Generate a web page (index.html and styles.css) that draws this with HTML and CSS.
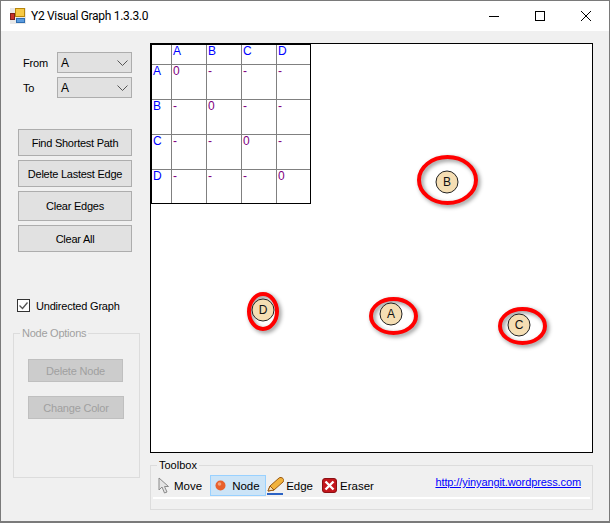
FILE: index.html
```html
<!DOCTYPE HTML>
<html>
<head>
<meta http-equiv="Content-Type" content="text/html; charset=utf-8">
<title>Y2 Visual Graph 1.3.3.0</title>
<link rel="stylesheet" href="styles.css">
</head>
<body>
<div class="window">
	<div class="titlebar">
		<svg class="app-icon" width="16" height="16" viewBox="0 0 16 16">
			<rect x="0" y="0" width="16" height="16" fill="#e8e8e8"/>
			<rect x="5.5" y="0.5" width="9" height="8" fill="#f6c945" stroke="#b8860b"/>
			<rect x="0.5" y="5.5" width="4" height="6" fill="#c8322a" stroke="#7c1d18"/>
			<rect x="6.5" y="10.5" width="8" height="4" fill="#5b9bde" stroke="#2f6db0"/>
		</svg>
		<span class="title">Y2 Visual Graph 1.3.3.0</span>
		<div class="caption">
			<svg class="cap-btn" width="46" height="30" viewBox="0 0 46 30"><path d="M18 15.5h10" stroke="#000" fill="none"/></svg>
			<svg class="cap-btn" width="46" height="30" viewBox="0 0 46 30"><rect x="18.5" y="10.5" width="9" height="9" stroke="#000" fill="none"/></svg>
			<svg class="cap-btn" width="46" height="30" viewBox="0 0 46 30"><path d="M18 10l10 10M28 10l-10 10" stroke="#000" fill="none"/></svg>
		</div>
	</div>
	<div class="content">
		<div class="sidebar">
			<div class="field">
				<label>From</label>
				<div class="combo">A<svg width="11" height="6" viewBox="0 0 11 6"><path d="M0.5 0.5l5 5 5-5" stroke="#555" fill="none"/></svg></div>
			</div>
			<div class="field">
				<label>To</label>
				<div class="combo">A<svg width="11" height="6" viewBox="0 0 11 6"><path d="M0.5 0.5l5 5 5-5" stroke="#555" fill="none"/></svg></div>
			</div>
			<div class="actions">
				<button class="btn">Find Shortest Path</button>
				<button class="btn">Delete Lastest Edge</button>
				<button class="btn tall">Clear Edges</button>
				<button class="btn">Clear All</button>
			</div>
			<div class="check">
				<svg width="13" height="13" viewBox="0 0 13 13"><rect x="0.5" y="0.5" width="12" height="12" fill="#fff" stroke="#333"/><path d="M2.5 6.5l3 3 5-6" stroke="#555" stroke-width="1.3" fill="none"/></svg>
				<span>Undirected Graph</span>
			</div>
			<fieldset class="node-options">
				<legend>Node Options</legend>
				<button class="btn-off" disabled>Delete Node</button>
				<button class="btn-off wide" disabled>Change Color</button>
			</fieldset>
		</div>
		<div class="main">
			<div class="canvas">
				<div class="matrix">
					<div class="cell"></div><div class="cell head">A</div><div class="cell head">B</div><div class="cell head">C</div><div class="cell head">D</div>
					<div class="cell head">A</div><div class="cell val">0</div><div class="cell val">-</div><div class="cell val">-</div><div class="cell val">-</div>
					<div class="cell head">B</div><div class="cell val">-</div><div class="cell val">0</div><div class="cell val">-</div><div class="cell val">-</div>
					<div class="cell head">C</div><div class="cell val">-</div><div class="cell val">-</div><div class="cell val">0</div><div class="cell val">-</div>
					<div class="cell head">D</div><div class="cell val">-</div><div class="cell val">-</div><div class="cell val">-</div><div class="cell val">0</div>
				</div>
				<!-- nodes: coords are canvas relative -->
				<svg class="graph" width="441" height="408" viewBox="0 0 441 408">
					<g class="rings">
						<ellipse cx="296.500" cy="136" rx="28.500" ry="23"/>
						<ellipse cx="242.500" cy="272" rx="22.500" ry="17"/>
						<ellipse cx="371.500" cy="282" rx="22.500" ry="17"/>
						<ellipse cx="112" cy="267.500" rx="14" ry="17.500"/>
					</g>
					<g class="node"><circle cx="296" cy="138" r="11"/><text x="296" y="142">B</text></g>
					<g class="node"><circle cx="240" cy="270" r="11"/><text x="240" y="274">A</text></g>
					<g class="node"><circle cx="368" cy="281" r="11"/><text x="368" y="285">C</text></g>
					<g class="node"><circle cx="112" cy="266" r="11"/><text x="112" y="270">D</text></g>
				</svg>
			</div>
			<fieldset class="toolbox">
				<legend>Toolbox</legend>
				<div class="strip">
					<div class="tool move">
						<svg width="12" height="17" viewBox="0 0 12 17"><path d="M1 1v12l3-3 2.500 6 2.500-1-2.500-5.500h4z" fill="#e4e4e4" stroke="#8a8a8a"/></svg>
						<span>Move</span>
					</div>
					<div class="tool active">
						<svg width="11" height="11" viewBox="0 0 11 11"><circle cx="5.500" cy="5.500" r="5" fill="#e8602c"/><circle cx="4.500" cy="4" r="1.800" fill="#f3a27c"/></svg>
						<span>Node</span>
					</div>
					<div class="tool pencil">
						<svg width="17" height="18" viewBox="0 0 17 18"><path d="M1 14l2-5 9-8c1-1 3-.5 4 .5s1 2.500 0 3.500l-9 8z" fill="#f2b33d" stroke="#9a5a12"/><path d="M1 14l2-5 4 4z" fill="#f7dfb5" stroke="#9a5a12"/><rect x="0" y="16" width="16" height="2" fill="#2a62c4"/></svg>
						<span>Edge</span>
					</div>
					<div class="tool eraser">
						<svg width="15" height="15" viewBox="0 0 15 15"><rect x="0.500" y="0.500" width="14" height="14" rx="2.500" fill="#c4161c" stroke="#8a1014"/><path d="M3.500 3.500l8 8M11.500 3.500l-8 8" stroke="#fff" stroke-width="2.400" fill="none"/></svg>
						<span>Eraser</span>
					</div>
					<a class="site-link" href="#">http://yinyangit.wordpress.com</a>
				</div>
			</fieldset>
		</div>
	</div>
</div>
</body>
</html>
```

FILE: styles.css
```css
html,body{ margin:0;padding:0;}
body{ width:610px;height:523px;overflow:hidden;font:11px "Liberation Sans",Arial,sans-serif;color:#000;}

.window{ width:610px;height:523px;box-sizing:border-box;border:1px solid #7a7a7a;border-bottom-width:2px;background:#f0f0f0;display:flex;flex-direction:column;}

.titlebar{ height:30px;background:#fff;display:flex;align-items:center;flex:none;}
.app-icon{ margin-left:9px;}
.title{ margin-left:5px;font:12px Roboto,sans-serif;letter-spacing:-0.3px;}
.caption{ margin-left:auto;display:flex;}
.cap-btn{ display:block;}

.content{ flex:1;display:flex;min-height:0;}

.sidebar{ width:149px;flex:none;padding:21px 0 0 16px;box-sizing:border-box;}
.field{ display:flex;align-items:center;height:21px;margin:0 0 4px 6px;}
.field label{ width:34px;letter-spacing:-0.2px;}
.combo{ width:75px;height:21px;box-sizing:border-box;border:1px solid #adadad;background:#e1e1e1;padding:0 3px;display:flex;align-items:center;justify-content:space-between;font-size:12px;}

.actions{ display:flex;flex-direction:column;gap:4px;margin:31px 0 0 1px;}
.btn{ width:114px;height:27px;border:1px solid #adadad;background:#e1e1e1;font:11px "Liberation Sans",Arial,sans-serif;letter-spacing:-0.25px;padding:0;color:#000;}
.btn.tall{ height:30px;}

.check{ display:flex;align-items:center;gap:6px;margin:47px 0 0 0;height:13px;letter-spacing:-0.2px;}
.check svg{ display:block;}

.node-options{ width:127px;height:151px;box-sizing:border-box;margin:15px 0 0 -4px;padding:20px 0 0 14px;border:1px solid #dcdcdc;color:#a0a0a0;}
.node-options legend{ padding:0 2px;margin-left:-8px;letter-spacing:-0.25px;}
.btn-off{ display:block;width:95px;height:23px;border:1px solid #bfbfbf;background:#ccc;color:#a0a0a0;font:11px "Liberation Sans",Arial,sans-serif;letter-spacing:-0.2px;padding:0;margin-bottom:14px;}
.btn-off.wide{ width:96px;}

.main{ flex:1;padding-top:12px;}
.canvas{ width:443px;height:410px;box-sizing:border-box;border:1px solid #000;background:#fff;position:relative;}

.matrix{ width:160px;height:160px;box-sizing:border-box;border:1px solid #000;display:grid;grid-template-columns:20px 35px 35px 35px 33px;grid-template-rows:20px 35px 35px 35px 33px;font-size:12px;}
.cell{ border-right:1px solid #808080;border-bottom:1px solid #808080;padding:0 0 0 1px;line-height:13px;box-sizing:border-box;}
.cell:nth-child(5n){ border-right:0;}
.cell:nth-last-child(-n+5){ border-bottom:0;}
.head{ color:#0000ff;}
.val{ color:#800080;}

.graph{ position:absolute;left:0;top:0;}
.rings ellipse{ fill:none;stroke:#f00;stroke-width:4;filter:drop-shadow(2px 2px 2px rgba(0,0,0,0.45));}
.node circle{ fill:#f5deb3;stroke:#222;stroke-width:1;}
.node text{ font:12px "Liberation Sans",Arial,sans-serif;text-anchor:middle;fill:#111;}

.toolbox{ width:443px;height:51px;box-sizing:border-box;margin:6px 0 0 0;padding:3px 2px 0;border:1px solid #dcdcdc;}
.toolbox legend{ padding:0 2px;margin-left:4px;}
.strip{ height:25px;box-sizing:border-box;border-bottom:2px solid #fff;display:flex;align-items:center;padding-left:4px;font-size:11.5px;}
.tool{ display:flex;align-items:center;height:21px;box-sizing:border-box;gap:4px;border:1px solid transparent;margin-right:5px;}
.tool.move{ margin-right:7px;}
.tool.active{ width:56px;background:#cce4f7;border-color:#99d1ff;padding-left:4px;gap:6px;margin-right:0;}
.tool.pencil{ gap:2px;margin-right:7px;}
.tool.eraser{ gap:3px;}
.site-link{ margin:2px 9px 0 auto;align-self:flex-start;color:#0000ff;font-size:11px;letter-spacing:-0.1px;}
```
